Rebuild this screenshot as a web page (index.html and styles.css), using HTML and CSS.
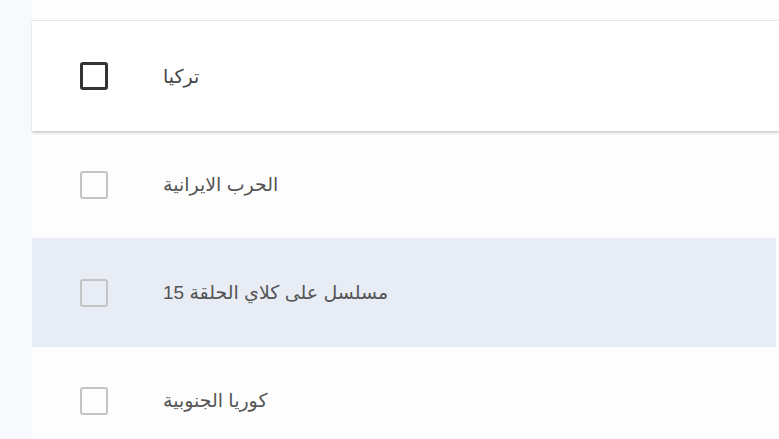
FILE: index.html
```html
<!DOCTYPE html>
<html lang="ar">
<head>
  <meta charset="UTF-8">
  <title>Labels</title>
  <link rel="stylesheet" href="styles.css">
</head>
<body>
  <div class="page">
    <ul class="label-list">
      <li class="label-row active">
        <span class="check dark"></span>
        <span class="label-name" dir="rtl">تركيا</span>
      </li>
      <li class="label-row second">
        <span class="check"></span>
        <span class="label-name" dir="rtl">الحرب الايرانية</span>
      </li>
      <li class="label-row hover third">
        <span class="check"></span>
        <span class="label-name" dir="rtl">مسلسل على كلاي الحلقة 15</span>
      </li>
      <li class="label-row">
        <span class="check"></span>
        <span class="label-name" dir="rtl">كوريا الجنوبية</span>
      </li>
    </ul>
  </div>
</body>
</html>
```

FILE: styles.css
```css
body {
  margin: 0;
  background-color: #f8f9fc;
  font-family: "Liberation Sans", "DejaVu Sans", sans-serif;
  overflow: hidden;
}
.page {
  margin-left: 32px;
  padding-top: 20px;
  height: 439px;
  box-sizing: border-box;
  background-color: #fdfdfd;
}
.label-list {
  list-style: none;
  margin: 0;
  padding: 0;
}
.label-row {
  display: flex;
  align-items: center;
  height: 107px;
  padding-left: 48px;
  margin-right: 3px;
}
.label-row.active {
  height: 110px;
  margin-right: 0;
  background-color: #fff;
  border-top: 1px solid #e6e6e6;
  box-shadow: 0 2px 2px rgba(0,0,0,0.18);
  position: relative;
}
.label-row.hover {
  height: 109px;
  background-color: #e8ecf5;
}
.check {
  width: 24px;
  height: 24px;
  border: 2px solid #c4c4c4;
  border-radius: 3px;
  flex-shrink: 0;
}
.check.dark {
  border: 3px solid #333;
  width: 22px;
  height: 22px;
}
.label-name {
  margin-left: 55px;
  font-size: 19px;
  color: #555;
}
.active .label-name {
  color: #444;
}
```
